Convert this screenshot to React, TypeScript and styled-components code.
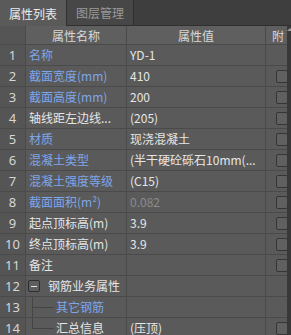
import React from "react";
import styled, { createGlobalStyle } from "styled-components";

const Global = createGlobalStyle`
  html, body { margin: 0; padding: 0; background: #3e3e3e; }
  body { font-family: "Noto Sans CJK SC", "Noto Sans", sans-serif; }
`;

const Panel = styled.div`
  width: 291px;
  height: 335px;
  overflow: hidden;
  background: #3e3e3e;
  display: flex;
  flex-direction: column;
`;

const TabBar = styled.div`
  height: 25px;
  display: flex;
  align-items: stretch;
  border-bottom: 1px solid #2f2f2f;
  background: #3e3e3e;
  flex-shrink: 0;
`;

const Tab = styled.div<{ $active?: boolean }>`
  width: 66px;
  display: flex;
  align-items: center;
  justify-content: center;
  font-size: 12px;
  color: ${(p) => (p.$active ? "#ececec" : "#9a9a9a")};
  background: ${(p) => (p.$active ? "#5a5a5a" : "#474747")};
  border-right: 1px solid #2f2f2f;
  margin-bottom: ${(p) => (p.$active ? "-1px" : "0")};
`;

const Body = styled.div`
  flex: 1;
  display: flex;
  min-height: 0;
`;

const Table = styled.div`
  width: 287px;
  display: grid;
  grid-template-columns: 25px 100px 138px 21px;
  grid-auto-rows: 20px;
  grid-template-rows: 18px;
  column-gap: 1px;
  row-gap: 1px;
  background: #4a4a4a;
  align-content: start;
`;

const Head = styled.div<{ $dim?: boolean }>`
  background: ${(p) => (p.$dim ? "#555555" : "#5f5f5f")};
  color: #d8d8d8;
  font-size: 12px;
  display: flex;
  align-items: center;
  justify-content: center;
  overflow: hidden;
  white-space: nowrap;
`;

const HeadLeft = styled(Head)`
  justify-content: flex-start;
  padding-left: 6px;
`;

const Num = styled.div`
  background: #555555;
  color: #d6d6d6;
  font-family: "Noto Sans", "Noto Sans CJK SC", sans-serif;
  font-size: 13px;
  display: flex;
  align-items: center;
  justify-content: center;
`;

const Cell = styled.div<{ $color?: string }>`
  background: #5a5a5a;
  color: ${(p) => p.$color || "#e6e6e6"};
  font-size: 12px;
  line-height: 20px;
  padding-left: 3px;
  white-space: nowrap;
  overflow: hidden;
  position: relative;
`;

const TreeCell = styled(Cell)`
  display: flex;
  align-items: center;
`;

const AttachCell = styled.div`
  background: #5a5a5a;
  display: flex;
  align-items: center;
  padding-left: 10px;
  overflow: hidden;
`;

const Check = styled.div`
  width: 10px;
  height: 11px;
  flex-shrink: 0;
  border: 1px solid #353535;
  border-radius: 2px;
  background: #606060;
`;

const Minus = styled.div`
  width: 10px;
  height: 10px;
  border: 1px solid #2e2e2e;
  border-radius: 2px;
  background: #5e5e5e;
  display: flex;
  align-items: center;
  justify-content: center;
  margin-left: -1px;
  margin-right: 8px;
  flex-shrink: 0;
  &::after {
    content: "";
    width: 6px;
    height: 1px;
    background: #e0e0e0;
  }
`;

const Branch = styled.span<{ $last?: boolean }>`
  position: absolute;
  left: 6px;
  top: -4px;
  width: 1px;
  height: ${(p) => (p.$last ? "14px" : "25px")};
  background: #444444;
  &::after {
    content: "";
    position: absolute;
    left: 0;
    top: 14px;
    width: 22px;
    height: 1px;
    background: #444444;
  }
`;

const Indented = styled.span`
  padding-left: 27px;
`;

const Scroll = styled.div`
  width: 4px;
  background: #383838;
  position: relative;
  &::before {
    content: "";
    position: absolute;
    left: 0;
    top: 2px;
    border-left: 3px solid transparent;
    border-right: 3px solid transparent;
    border-bottom: 3px solid #9a9a9a;
  }
`;

type Row = {
  name: string;
  value?: string;
  nameColor?: string;
  valueColor?: string;
  check?: boolean;
  kind?: "group" | "child" | "lastChild";
};

const BLUE = "#7ea6ea";
const WHITE = "#e6e6e6";

const rows: Row[] = [
  { name: "名称", value: "YD-1", nameColor: BLUE },
  { name: "截面宽度(mm)", value: "410", nameColor: BLUE, check: true },
  { name: "截面高度(mm)", value: "200", nameColor: BLUE, check: true },
  { name: "轴线距左边线...", value: "(205)", nameColor: WHITE, check: true },
  { name: "材质", value: "现浇混凝土", nameColor: BLUE, check: true },
  { name: "混凝土类型", value: "(半干硬砼砾石10mm(...", nameColor: BLUE, check: true },
  { name: "混凝土强度等级", value: "(C15)", nameColor: BLUE, check: true },
  { name: "截面面积(m²)", value: "0.082", nameColor: BLUE, valueColor: "#8c8c8c", check: true },
  { name: "起点顶标高(m)", value: "3.9", nameColor: WHITE, check: true },
  { name: "终点顶标高(m)", value: "3.9", nameColor: WHITE, check: true },
  { name: "备注", value: "", nameColor: WHITE, check: true },
  { name: "钢筋业务属性", kind: "group", nameColor: WHITE },
  { name: "其它钢筋", kind: "child", nameColor: BLUE },
  { name: "汇总信息", value: "(压顶)", kind: "lastChild", nameColor: WHITE, check: true },
];

function NameCell({ row }: { row: Row }) {
  if (row.kind === "group") {
    return (
      <TreeCell $color={row.nameColor}>
        <Minus />
        {row.name}
      </TreeCell>
    );
  }
  if (row.kind === "child" || row.kind === "lastChild") {
    return (
      <Cell $color={row.nameColor}>
        <Branch $last={row.kind === "lastChild"} />
        <Indented>{row.name}</Indented>
      </Cell>
    );
  }
  return <Cell $color={row.nameColor}>{row.name}</Cell>;
}

export default function App() {
  return (
    <Panel>
      <Global />
      <TabBar>
        <Tab $active>属性列表</Tab>
        <Tab>图层管理</Tab>
      </TabBar>
      <Body>
        <Table>
          <Head $dim />
          <Head>属性名称</Head>
          <Head>属性值</Head>
          <HeadLeft>附</HeadLeft>
          {rows.map((r, i) => (
            <React.Fragment key={i}>
              <Num>{i + 1}</Num>
              <NameCell row={r} />
              <Cell $color={r.valueColor}>{r.value}</Cell>
              <AttachCell>{r.check ? <Check /> : null}</AttachCell>
            </React.Fragment>
          ))}
        </Table>
        <Scroll />
      </Body>
    </Panel>
  );
}
